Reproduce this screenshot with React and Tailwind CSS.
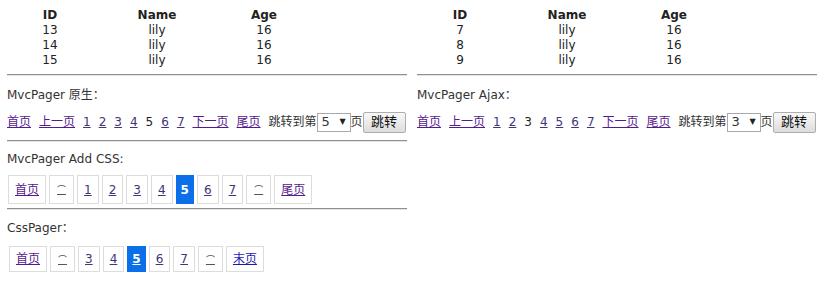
import React from "react";

const FONT = { fontFamily: '"DejaVu Sans", "Noto Sans CJK SC", sans-serif' };

function DataTable({ rows }) {
  return (
    <div className="grid grid-cols-[86px_128px_86px] text-[12px] leading-[15px] text-[#222] text-center">
      <div className="font-bold">ID</div>
      <div className="font-bold">Name</div>
      <div className="font-bold">Age</div>
      {rows.map((r) => (
        <React.Fragment key={r}>
          <div>{r}</div>
          <div>lily</div>
          <div>16</div>
        </React.Fragment>
      ))}
    </div>
  );
}

function Hr() {
  return (
    <div className="w-[400px] flex flex-col">
      <div className="h-px bg-[#8e8e8e]" />
      <div className="h-px bg-[#e4e4e4]" />
    </div>
  );
}

function PlainPager({ current, sel }) {
  const nums = [1, 2, 3, 4, 5, 6, 7];
  return (
    <div className="flex items-center h-[20px] text-[12px] text-[#333]">
      <div className="flex items-center gap-[8px]">
        <a className="underline text-[#551a8b]">首页</a>
        <a className="underline text-[#551a8b]">上一页</a>
        {nums.map((n) =>
          n === current ? (
            <span key={n} className="text-[#222]">{n}</span>
          ) : (
            <a key={n} className="underline text-[#3f3577]">{n}</a>
          )
        )}
        <a className="underline text-[#551a8b]">下一页</a>
        <a className="underline text-[#551a8b]">尾页</a>
        <span className="flex items-center">
          跳转到第
          <span className="flex items-center h-[19px] w-[34px] border border-[#a9a9a9] bg-white pl-[4px] pr-[4px] justify-between">
            <span className="text-[13px]">{sel}</span>
            <span className="text-[8px] text-[#222]">▼</span>
          </span>
          页
          <span className="flex items-center justify-center h-[21px] w-[43px] border border-[#adadad] rounded-[2px] bg-gradient-to-b from-[#f8f8f8] to-[#dddddd] text-[13px] text-[#111]">
            跳转
          </span>
        </span>
      </div>
    </div>
  );
}

function BoxPager({ items, h }) {
  return (
    <div className="flex items-center gap-[3px] text-[12px]">
      {items.map((it, i) =>
        it.active ? (
          <span
            key={i}
            className={`flex items-center justify-center px-[5px] bg-[#0b6fe8] text-white font-bold ${h}`}
          >
            <span className={it.u ? "underline" : ""}>{it.t}</span>
          </span>
        ) : it.arc ? (
          <span
            key={i}
            className={`flex items-center justify-center w-[25px] border border-[#dcdcdc] ${h}`}
          >
            <a className="underline text-[#555] text-[12px] leading-[15px] flex items-end">
              <span className="text-[9px] leading-[9px] translate-y-[1px]">⌒</span>
            </a>
          </span>
        ) : (
          <span
            key={i}
            className={`flex items-center justify-center px-[6px] border border-[#dcdcdc] ${h}`}
          >
            <a className={`underline ${it.c || "text-[#3f3577]"}`}>{it.t}</a>
          </span>
        )
      )}
    </div>
  );
}

export default function App() {
  const P = "text-[#551a8b]";
  const pager1 = [
    { t: "首页", c: P },
    { arc: true },
    { t: "1" },
    { t: "2" },
    { t: "3" },
    { t: "4" },
    { t: "5", active: true },
    { t: "6" },
    { t: "7" },
    { arc: true },
    { t: "尾页", c: P },
  ];
  const pager2 = [
    { t: "首页", c: P },
    { arc: true },
    { t: "3" },
    { t: "4" },
    { t: "5", active: true, u: true },
    { t: "6" },
    { t: "7" },
    { arc: true },
    { t: "末页", c: "text-[#1a1ab0]" },
  ];
  return (
    <div className="w-[836px] h-[287px] bg-white overflow-hidden" style={FONT}>
      <div className="flex gap-[10px] pl-[7px] pt-[8px]">
        <div className="w-[400px] flex flex-col">
          <DataTable rows={[13, 14, 15]} />
          <div className="mt-[6px]">
            <Hr />
          </div>
          <div className="mt-[12px] h-[15px] leading-[15px] text-[12px] text-[#333]">MvcPager 原生：</div>
          <div className="mt-[9px]">
            <PlainPager current={5} sel="5" />
          </div>
          <div className="mt-[8px]">
            <Hr />
          </div>
          <div className="mt-[10px] h-[15px] leading-[15px] text-[12px] text-[#333]">MvcPager Add CSS:</div>
          <div className="mt-[8px] pl-[1px]">
            <BoxPager items={pager1} h="h-[29px]" />
          </div>
          <div className="mt-[4px]">
            <Hr />
          </div>
          <div className="mt-[11px] h-[15px] leading-[15px] text-[12px] text-[#333]">CssPager：</div>
          <div className="mt-[10px] pl-[2px]">
            <BoxPager items={pager2} h="h-[26px]" />
          </div>
        </div>
        <div className="w-[400px] flex flex-col">
          <DataTable rows={[7, 8, 9]} />
          <div className="mt-[6px]">
            <Hr />
          </div>
          <div className="mt-[12px] h-[15px] leading-[15px] text-[12px] text-[#333]">MvcPager Ajax：</div>
          <div className="mt-[9px]">
            <PlainPager current={3} sel="3" />
          </div>
        </div>
      </div>
    </div>
  );
}
